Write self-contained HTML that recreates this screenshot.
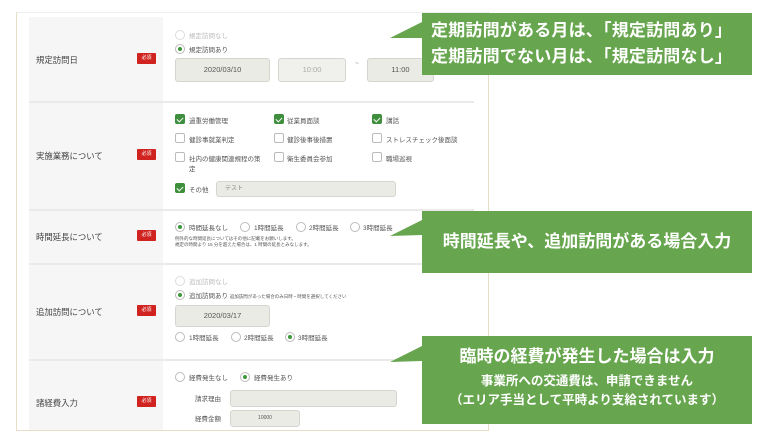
<!DOCTYPE html>
<html><head><meta charset="utf-8"><style>
*{margin:0;padding:0;box-sizing:border-box}
body{width:764px;height:440px;background:#fff;position:relative;overflow:hidden;font-family:"Liberation Sans","Noto Sans CJK JP",sans-serif;color:#555}
.a{position:absolute;white-space:nowrap}
.frame{position:absolute;left:16px;top:12px;width:473px;height:419px;border:1px solid #e6dcc8;border-top-color:#eee;}
.lab{position:absolute;left:29px;width:134px;background:#f6f6f6}
.line{position:absolute;left:29px;width:445px;height:2px;background:#eaeaea}
.lt{font-size:8.4px;color:#444}
.badge{position:absolute;left:137px;width:19px;height:11px;background:#d0231f;color:#fff;font-size:5px;text-align:center;line-height:11px;border-radius:1px}
.r{position:absolute;width:10px;height:10px;border:1px solid #bbb;border-radius:50%;background:#fff}
.r.on::after{content:"";position:absolute;left:2px;top:2px;width:4px;height:4px;border-radius:50%;background:#3a9a3a}
.r.dis{border-color:#ddd}
.c{position:absolute;width:10px;height:10px;border:1px solid #bbb;border-radius:2px;background:#fff}
.c.on{background:#3e8e3e;border-color:#3e8e3e}
.c.on::after{content:"";position:absolute;left:2px;top:1px;width:3px;height:5px;border:solid #fff;border-width:0 1px 1px 0;transform:rotate(45deg)}
.t{font-size:6.5px;color:#555}
.in{position:absolute;background:#ebebe6;border:1px solid #d6d6d0;border-radius:3px;font-size:7.5px;color:#555;text-align:center}
.call{position:absolute;left:422px;width:330px;background:#67a64e;color:#fff;font-weight:bold;text-align:center}
</style></head><body>
<div class="frame"></div>
<div class="lab" style="top:17px;height:84px"></div>
<div class="lab" style="top:103px;height:106px"></div>
<div class="lab" style="top:211px;height:52px"></div>
<div class="lab" style="top:265px;height:94px"></div>
<div class="lab" style="top:361px;height:69px"></div>
<div class="line" style="top:101px"></div>
<div class="line" style="top:209px"></div>
<div class="line" style="top:263px"></div>
<div class="line" style="top:359px"></div>

<div class="a lt" style="left:36px;top:54px">規定訪問日</div><div class="badge" style="top:53px">必須</div>
<div class="a lt" style="left:36px;top:150px">実施業務について</div><div class="badge" style="top:149px">必須</div>
<div class="a lt" style="left:36px;top:231px">時間延長について</div><div class="badge" style="top:230px">必須</div>
<div class="a lt" style="left:36px;top:306px">追加訪問について</div><div class="badge" style="top:305px">必須</div>
<div class="a lt" style="left:36px;top:397px">諸経費入力</div><div class="badge" style="top:396px">必須</div>

<!-- row1 -->
<div class="r dis" style="left:175px;top:30px"></div><div class="a t" style="left:189px;top:30px;color:#bbb">規定訪問なし</div>
<div class="r on" style="left:175px;top:44px"></div><div class="a t" style="left:189px;top:44px">規定訪問あり</div>
<div class="in" style="left:175px;top:58px;width:95px;height:24px;line-height:22px">2020/03/10</div>
<div class="in" style="left:278px;top:58px;width:68px;height:24px;line-height:22px;background:#f0f0ec;color:#aaa">10:00</div>
<div class="a t" style="left:355px;top:60px;color:#888">~</div>
<div class="in" style="left:367px;top:58px;width:67px;height:24px;line-height:22px">11:00</div>

<!-- row2 -->
<div class="c on" style="left:175px;top:114px"></div><div class="a t" style="left:189px;top:115px">過重労働管理</div>
<div class="c on" style="left:274px;top:114px"></div><div class="a t" style="left:287px;top:115px">従業員面談</div>
<div class="c on" style="left:372px;top:114px"></div><div class="a t" style="left:386px;top:115px">講話</div>
<div class="c" style="left:175px;top:133px"></div><div class="a t" style="left:189px;top:134px">健診事就業判定</div>
<div class="c" style="left:274px;top:133px"></div><div class="a t" style="left:287px;top:134px">健診後事後措置</div>
<div class="c" style="left:372px;top:133px"></div><div class="a t" style="left:386px;top:134px">ストレスチェック後面談</div>
<div class="c" style="left:175px;top:152px"></div><div class="a t" style="left:189px;top:153px">社内の健康関連規程の策<br>定</div>
<div class="c" style="left:274px;top:152px"></div><div class="a t" style="left:287px;top:153px">衛生委員会参加</div>
<div class="c" style="left:372px;top:152px"></div><div class="a t" style="left:386px;top:153px">職場巡視</div>
<div class="c on" style="left:175px;top:183px"></div><div class="a t" style="left:189px;top:184px">その他</div>
<div class="in" style="left:216px;top:181px;width:180px;height:16px;text-align:left;padding-left:8px;font-size:6px;line-height:14px;color:#888">テスト</div>

<!-- row3 -->
<div class="r on" style="left:175px;top:222px"></div><div class="a t" style="left:189px;top:222px">時間延長なし</div>
<div class="r" style="left:240px;top:222px"></div><div class="a t" style="left:254px;top:222px">1時間延長</div>
<div class="r" style="left:296px;top:222px"></div><div class="a t" style="left:309px;top:222px">2時間延長</div>
<div class="r" style="left:350px;top:222px"></div><div class="a t" style="left:363px;top:222px">3時間延長</div>
<div class="a" style="left:175px;top:236px;font-size:4.5px;line-height:6px;color:#555">例外的な時間延長についてはその他に記載をお願いします。<br>規定の時間より 15 分を超えた場合は、1 時間の延長とみなします。</div>

<!-- row4 -->
<div class="r dis" style="left:175px;top:276px"></div><div class="a t" style="left:189px;top:276px;color:#bbb">追加訪問なし</div>
<div class="r on" style="left:175px;top:290px"></div><div class="a t" style="left:189px;top:290px">追加訪問あり <span style="font-size:4.5px">追加訪問があった場合のみ日時・時間を選択してください</span></div>
<div class="in" style="left:175px;top:305px;width:95px;height:22px;line-height:20px">2020/03/17</div>
<div class="r" style="left:175px;top:332px"></div><div class="a t" style="left:189px;top:332px">1時間延長</div>
<div class="r" style="left:231px;top:332px"></div><div class="a t" style="left:244px;top:332px">2時間延長</div>
<div class="r on" style="left:285px;top:332px"></div><div class="a t" style="left:298px;top:332px">3時間延長</div>

<!-- row5 -->
<div class="r" style="left:175px;top:372px"></div><div class="a t" style="left:189px;top:372px">経費発生なし</div>
<div class="r on" style="left:240px;top:372px"></div><div class="a t" style="left:254px;top:372px">経費発生あり</div>
<div class="a t" style="left:195px;top:393px">請求理由</div>
<div class="in" style="left:230px;top:390px;width:167px;height:17px"></div>
<div class="a t" style="left:195px;top:413px">経費金額</div>
<div class="in" style="left:230px;top:410px;width:70px;height:17px;font-size:5px;line-height:15px">10000</div>

<!-- callouts -->
<svg class="a" style="left:388px;top:0" width="40" height="440"><polygon points="34,22 34,38 2,38" fill="#67a64e"/><polygon points="34,220 34,235 2,236" fill="#67a64e"/><polygon points="34,346 34,361 2,362" fill="#67a64e"/></svg>
<div class="call" style="top:13px;height:62px;font-size:17px;line-height:26px;padding-top:5px;text-align:left;padding-left:9px;letter-spacing:0.2px">定期訪問がある月は、「規定訪問あり」<br>定期訪問でない月は、「規定訪問なし」</div>
<div class="call" style="top:211px;height:62px;font-size:17px;line-height:62px">時間延長や、追加訪問がある場合入力</div>
<div class="call" style="top:336px;height:88px;padding-top:8px"><div style="font-size:17px;line-height:26px">臨時の経費が発生した場合は入力</div><div style="font-size:12.5px;line-height:19px;margin-top:2px">事業所への交通費は、申請できません<br>（エリア手当として平時より支給されています）</div></div>
</body></html>
